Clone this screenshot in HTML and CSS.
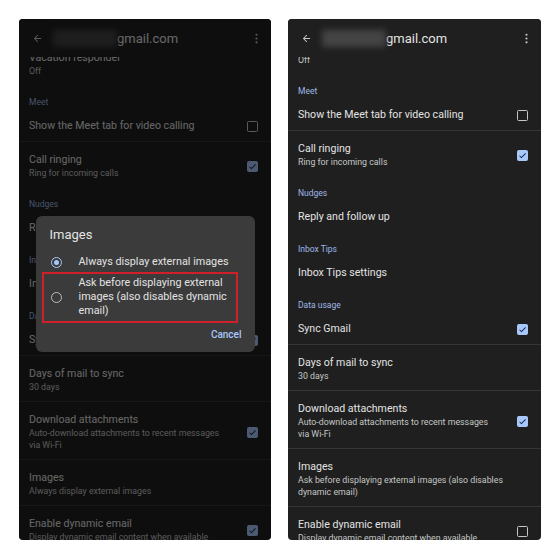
FILE: index.html
```html
<!DOCTYPE html>
<html lang="en">
<head>
    <meta charset="UTF-8">
    <meta name="viewport" content="width=device-width, initial-scale=1.0">
    <title>Gmail image settings</title>
    <link rel="stylesheet" href="styles.css">
</head>
<body>
    <main class="shots">
        <!-- left: dialog open -->
        <section class="phone phone-left">
            <header class="appbar">
                <svg class="back" viewBox="0 0 24 24"><path d="M20 11H7.83l5.59-5.59L12 4l-8 8 8 8 1.41-1.41L7.83 13H20v-2z"/></svg>
                <span class="redact"></span>
                <span class="account">gmail.com</span>
                <svg class="more" viewBox="0 0 24 24"><circle cx="12" cy="5" r="2"/><circle cx="12" cy="12" r="2"/><circle cx="12" cy="19" r="2"/></svg>
            </header>
            <div class="scroll">
                <div class="list list-left">
                    <div class="item"><div class="text"><div class="title">Vacation responder</div><div class="sub">Off</div></div></div>
                    <div class="label">Meet</div>
                    <div class="group">
                        <div class="item"><div class="text"><div class="title">Show the Meet tab for video calling</div></div><span class="cb"></span></div>
                        <div class="item"><div class="text"><div class="title">Call ringing</div><div class="sub">Ring for incoming calls</div></div><span class="cb on"><svg viewBox="0 0 24 24"><path d="M9 16.2 4.8 12l-1.4 1.4L9 19 21 7l-1.4-1.4L9 16.2z"/></svg></span></div>
                    </div>
                    <div class="label">Nudges</div>
                    <div class="item"><div class="text"><div class="title">Reply and follow up</div></div></div>
                    <div class="label">Inbox Tips</div>
                    <div class="item"><div class="text"><div class="title">Inbox Tips settings</div></div></div>
                    <div class="label">Data usage</div>
                    <div class="group">
                        <div class="item"><div class="text"><div class="title">Sync Gmail</div></div><span class="cb on"><svg viewBox="0 0 24 24"><path d="M9 16.2 4.8 12l-1.4 1.4L9 19 21 7l-1.4-1.4L9 16.2z"/></svg></span></div>
                        <div class="item"><div class="text"><div class="title">Days of mail to sync</div><div class="sub">30 days</div></div></div>
                        <div class="item"><div class="text"><div class="title">Download attachments</div><div class="sub">Auto-download attachments to recent messages via Wi-Fi</div></div><span class="cb on"><svg viewBox="0 0 24 24"><path d="M9 16.2 4.8 12l-1.4 1.4L9 19 21 7l-1.4-1.4L9 16.2z"/></svg></span></div>
                        <div class="item"><div class="text"><div class="title">Images</div><div class="sub">Always display external images</div></div></div>
                        <div class="item"><div class="text"><div class="title">Enable dynamic email</div><div class="sub">Display dynamic email content when available</div></div><span class="cb on"><svg viewBox="0 0 24 24"><path d="M9 16.2 4.8 12l-1.4 1.4L9 19 21 7l-1.4-1.4L9 16.2z"/></svg></span></div>
                    </div>
                </div>
            </div>
            <div class="scrim">
                <div class="dialog">
                    <div class="dialog-title">Images</div>
                    <div class="option">
                        <span class="radio on"></span>
                        <span class="option-text">Always display external images</span>
                    </div>
                    <div class="option marked">
                        <span class="radio"></span>
                        <span class="option-text">Ask before displaying external images (also disables dynamic email)</span>
                    </div>
                    <div class="actions"><span class="btn">Cancel</span></div>
                </div>
            </div>
        </section>

        <!-- right: after choosing "ask before" -->
        <section class="phone">
            <header class="appbar">
                <svg class="back" viewBox="0 0 24 24"><path d="M20 11H7.83l5.59-5.59L12 4l-8 8 8 8 1.41-1.41L7.83 13H20v-2z"/></svg>
                <span class="redact"></span>
                <span class="account">gmail.com</span>
                <svg class="more" viewBox="0 0 24 24"><circle cx="12" cy="5" r="2"/><circle cx="12" cy="12" r="2"/><circle cx="12" cy="19" r="2"/></svg>
            </header>
            <div class="scroll">
                <div class="list list-right">
                    <div class="item"><div class="text"><div class="title">Vacation responder</div><div class="sub">Off</div></div></div>
                    <div class="label">Meet</div>
                    <div class="group">
                        <div class="item"><div class="text"><div class="title">Show the Meet tab for video calling</div></div><span class="cb"></span></div>
                        <div class="item"><div class="text"><div class="title">Call ringing</div><div class="sub">Ring for incoming calls</div></div><span class="cb on"><svg viewBox="0 0 24 24"><path d="M9 16.2 4.8 12l-1.4 1.4L9 19 21 7l-1.4-1.4L9 16.2z"/></svg></span></div>
                    </div>
                    <div class="label">Nudges</div>
                    <div class="item"><div class="text"><div class="title">Reply and follow up</div></div></div>
                    <div class="label">Inbox Tips</div>
                    <div class="item"><div class="text"><div class="title">Inbox Tips settings</div></div></div>
                    <div class="label">Data usage</div>
                    <div class="group">
                        <div class="item"><div class="text"><div class="title">Sync Gmail</div></div><span class="cb on"><svg viewBox="0 0 24 24"><path d="M9 16.2 4.8 12l-1.4 1.4L9 19 21 7l-1.4-1.4L9 16.2z"/></svg></span></div>
                        <div class="item"><div class="text"><div class="title">Days of mail to sync</div><div class="sub">30 days</div></div></div>
                        <div class="item"><div class="text"><div class="title">Download attachments</div><div class="sub">Auto-download attachments to recent messages via Wi-Fi</div></div><span class="cb on"><svg viewBox="0 0 24 24"><path d="M9 16.2 4.8 12l-1.4 1.4L9 19 21 7l-1.4-1.4L9 16.2z"/></svg></span></div>
                        <div class="item"><div class="text"><div class="title">Images</div><div class="sub">Ask before displaying external images (also disables dynamic email)</div></div></div>
                        <div class="item"><div class="text"><div class="title">Enable dynamic email</div><div class="sub">Display dynamic email content when available</div></div><span class="cb"></span></div>
                    </div>
                </div>
            </div>
        </section>
    </main>
</body>
</html>
```

FILE: styles.css
```css
body {
    margin: 0;
    background-color: #fff;
    font-family: Roboto, "Liberation Sans", sans-serif;
}
.shots {
    display: flex;
    gap: 17px;
    padding: 19px 0 0 19px;
}
.phone {
    position: relative;
    display: flex;
    flex-direction: column;
    width: 253px;
    height: 521px;
    background-color: #1f1f1f;
    border-radius: 4px;
    overflow: hidden;
}
.phone-left {
    width: 252px;
}
.appbar {
    display: flex;
    align-items: center;
    height: 38px;
    flex-shrink: 0;
    padding: 0 8px 0 13px;
    background-color: #1f1f1f;
    position: relative;
    z-index: 1;
}
.back {
    width: 11px;
    height: 11px;
    fill: #c4c7c5;
}
.redact {
    width: 64px;
    height: 17px;
    margin-left: 10px;
    background-color: #444;
    filter: blur(3px);
}
.account {
    font-size: 13px;
    color: #e3e3e3;
}
.more {
    width: 13px;
    height: 13px;
    margin-left: auto;
    fill: #c4c7c5;
}
.scroll {
    flex: 1;
    overflow: hidden;
}
.list-left {
    margin-top: -17px;
}
.list-right {
    margin-top: -28px;
}
.item {
    display: flex;
    align-items: center;
    padding: 11px 13px 8px 10px;
}
.group .item + .item {
    border-top: 1px solid #363636;
}
.text {
    flex: 1;
}
.title {
    font-size: 10.6px;
    line-height: 14px;
    color: #e3e3e3;
}
.sub {
    font-size: 8.8px;
    line-height: 12px;
    color: #c4c7c5;
    padding-right: 20px;
}
.label {
    padding: 11px 10px 0;
    font-size: 8.5px;
    line-height: 12px;
    color: #9fb8e6;
}
.cb {
    width: 9px;
    height: 9px;
    border: 1.5px solid #c4c7c5;
    border-radius: 1.5px;
    flex-shrink: 0;
}
.cb.on {
    background-color: #a8c7fa;
    border-color: #a8c7fa;
    display: flex;
    align-items: center;
    justify-content: center;
}
.cb svg {
    width: 9px;
    height: 9px;
    fill: #0b1d3a;
}
.scrim {
    position: absolute;
    inset: 0;
    z-index: 2;
    background-color: rgba(0, 0, 0, 0.55);
    display: flex;
    align-items: center;
    justify-content: center;
}
.dialog {
    width: 219px;
    margin-top: 9px;
    padding-bottom: 11px;
    background-color: #3b3b3b;
    border-radius: 6px;
}
.dialog-title {
    padding: 11px 14px 8px;
    font-size: 13px;
    line-height: 16px;
    color: #e3e3e3;
}
.option {
    display: flex;
    align-items: center;
    padding: 4px 17px 4px 15px;
    font-size: 10.8px;
    line-height: 14px;
    color: #e3e3e3;
}
.option-text {
    margin-left: 17px;
}
.option.marked {
    margin: -1px 17px 0 6px;
    padding: 2px 4px 3px 7px;
    border: 2px solid #cf1f2a;
}
.radio {
    width: 9px;
    height: 9px;
    border: 1.5px solid #bdbdbd;
    border-radius: 50%;
    flex-shrink: 0;
    display: flex;
    align-items: center;
    justify-content: center;
}
.radio.on {
    border-color: #a8c7fa;
}
.radio.on::after {
    content: "";
    width: 5px;
    height: 5px;
    border-radius: 50%;
    background-color: #a8c7fa;
}
.actions {
    display: flex;
    justify-content: flex-end;
    padding: 6px 13px 0;
    line-height: 12px;
}
.btn {
    font-size: 10px;
    font-weight: 500;
    color: #a8c7fa;
}
```
